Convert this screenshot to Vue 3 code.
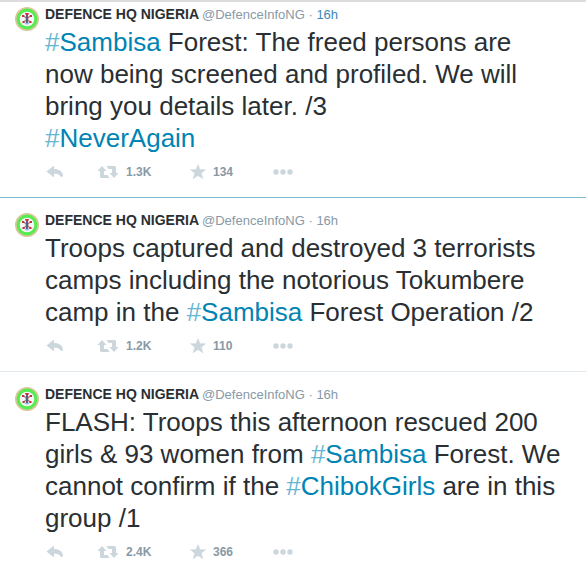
<script setup>
const tweets = [
  {
    id: 3,
    parts: [
      { tag: 'Sambisa' },
      { text: ' Forest: The freed persons are\nnow being screened and profiled. We will bring you details later. /3\n' },
      { tag: 'NeverAgain' },
    ],
    retweets: '1.3K',
    favorites: '134',
    active: true,
  },
  {
    id: 2,
    parts: [
      { text: 'Troops captured and destroyed 3 terrorists camps including the notorious Tokumbere camp in the ' },
      { tag: 'Sambisa' },
      { text: ' Forest Operation /2' },
    ],
    retweets: '1.2K',
    favorites: '110',
  },
  {
    id: 1,
    parts: [
      { text: 'FLASH: Troops this afternoon rescued 200 girls & 93 women from ' },
      { tag: 'Sambisa' },
      { text: ' Forest. We cannot confirm if the ' },
      { tag: 'ChibokGirls' },
      { text: ' are in this group /1' },
    ],
    retweets: '2.4K',
    favorites: '366',
  },
]
</script>

<template>
  <main class="timeline">
    <article v-for="t in tweets" :key="t.id" class="tweet" :class="{ active: t.active }">
      <svg class="avatar" viewBox="0 0 24 24" aria-hidden="true">
        <circle cx="12" cy="12" r="12" fill="#d9c79c" />
        <circle cx="12" cy="12" r="10.400" fill="#55ec50" />
        <circle cx="12" cy="12" r="7.300" fill="#f4f6f8" />
        <path d="M8.500 8.500l7 7M15.500 8.500l-7 7" stroke="#b0707c" stroke-width="1.300" />
        <path d="M10 6h4l-.8 2h-2.400z" fill="#c92f3c" />
        <path d="M12 8v8" stroke="#5c6080" stroke-width="2" />
        <path d="M9.300 15q2.700 4 5.400 0" fill="none" stroke="#8fbde2" stroke-width="1.300" />
        <path d="M7 8h2v2H7zM15 8h2v2h-2zM7.500 14h2v2h-2zM14.500 14h2v2h-2z" fill="#c8303e" />
      </svg>
      <div class="content">
        <header class="head">
          <a class="name" href="#">DEFENCE HQ NIGERIA</a>
          <span class="meta"><a class="handle" href="#">@DefenceInfoNG</a> · <a class="time" href="#">16h</a></span>
        </header>
        <p class="body"><template v-for="(p, i) in t.parts" :key="i"><a v-if="p.tag" class="tag" href="#"><span class="hash">#</span>{{ p.tag }}</a><template v-else>{{ p.text }}</template></template></p>
        <footer class="actions">
          <button class="action reply" type="button" aria-label="Reply">
            <svg width="18" height="14" viewBox="0 0 18 14"><path d="M1.500 6.500L8.300 1Q9 .6 9 1.500V4c5 0 8.500 2.200 9 6.500 0 1.700-2.200 1.900-2.800.5C14.300 9.300 12.500 8.700 9 8.700v2.800q0 .9-.7.500z" /></svg>
          </button>
          <button class="action retweet" type="button" aria-label="Retweet">
            <svg width="22" height="14" viewBox="0 0 22 14"><path d="M5 1l4.500 5H7v4h3.300l2.500 3H4.500Q3 13 3 11.500V6H.5zM17 13l-4.500-5H15V4h-3.300L9.200 1h8.300Q19 1 19 2.500V8h2.500z" /></svg>
            <span>{{ t.retweets }}</span>
          </button>
          <button class="action favorite" type="button" aria-label="Favorite">
            <svg width="16" height="16" viewBox="0 0 16 16"><path d="M8 .7l2 5h5.500l-4.300 3.500 1.700 5.500L8 11.500l-4.900 3.200 1.700-5.500L.5 5.700H6z" stroke="#ccd6dd" stroke-width=".6" stroke-linejoin="round" /></svg>
            <span>{{ t.favorites }}</span>
          </button>
          <button class="action more" type="button" aria-label="More">
            <svg width="20" height="6" viewBox="0 0 20 6"><circle cx="3" cy="3" r="2.700" /><circle cx="10" cy="3" r="2.700" /><circle cx="17" cy="3" r="2.700" /></svg>
          </button>
        </footer>
      </div>
    </article>
  </main>
</template>

<style>
body {
  background: #fff;
}
</style>

<style scoped>
.timeline {
  border-top: 2px solid #dcdcdc;
  font-family: "Liberation Sans", Arial, sans-serif;
  color: #292f33;
}
.tweet {
  display: flex;
  gap: 6px;
  padding: 13px 12px 16px 15px;
  border-bottom: 1px solid #e1e8ed;
}
.tweet:first-child {
  padding-top: 3px;
}
.tweet.active {
  border-bottom-color: #7dbbd3;
}
.tweet:last-child {
  border-bottom: 0;
}
.avatar {
  flex: none;
  width: 24px;
  height: 24px;
  margin-top: 2px;
}
.content {
  flex: 1;
  min-width: 0;
}
a {
  color: inherit;
  text-decoration: none;
}
.head {
  display: flex;
  align-items: baseline;
  gap: 3px;
  margin-bottom: 2px;
  font-size: 14px;
  line-height: 18px;
  white-space: nowrap;
}
.name {
  font-weight: bold;
}
.meta {
  font-size: 13px;
  color: #8899a6;
}
.active .time {
  color: #3b88b5;
}
.body {
  margin: 0;
  font-size: 26px;
  line-height: 32px;
  white-space: pre-line;
}
.tag {
  color: #0084b4;
}
.hash {
  color: #66b5d2;
}
.actions {
  display: flex;
  align-items: center;
  height: 18px;
  margin-top: 9px;
}
.action {
  display: flex;
  align-items: center;
  gap: 7px;
  padding: 0;
  border: 0;
  background: none;
  color: #8899a6;
  font: bold 12px/18px "Liberation Sans", Arial, sans-serif;
}
.action svg {
  fill: #ccd6dd;
}
.reply {
  width: 52px;
}
.retweet {
  width: 93px;
}
.favorite {
  width: 83px;
}
</style>
